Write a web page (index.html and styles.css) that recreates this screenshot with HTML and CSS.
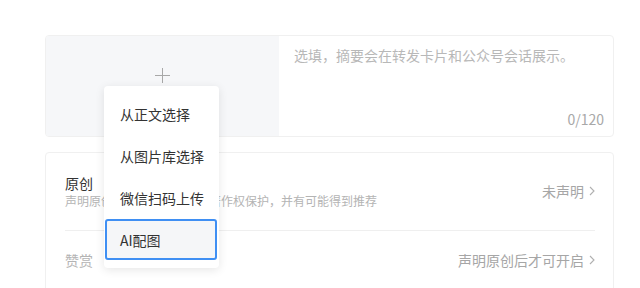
FILE: index.html
```html
<!DOCTYPE html>
<html lang="zh-CN">
<head>
<meta charset="utf-8">
<title>封面与摘要</title>
<link rel="stylesheet" href="styles.css">
</head>
<body>
<div class="page">
  <div class="cover-card">
    <div class="cover-pick">
      <svg class="plus" width="15" height="15" viewBox="0 0 15 15"><path d="M7.5 0v15M0 7.5h15" stroke="#a8a8a8" stroke-width="1" fill="none"/></svg>
    </div>
    <div class="digest">
      <div class="placeholder">选填，摘要会在转发卡片和公众号会话展示。</div>
      <div class="counter">0/120</div>
    </div>
  </div>

  <div class="settings-card">
    <div class="row row-first">
      <div class="row-main">
        <div class="row-label">原创</div>
        <div class="row-desc">声明原创后，该文章将受到著作权保护，并有可能得到推荐</div>
      </div>
      <div class="row-value">未声明<svg class="chev" width="6" height="10" viewBox="0 0 6 10"><path d="M1 1l4 4-4 4" stroke="#b0b0b0" stroke-width="1.1" fill="none"/></svg></div>
    </div>
    <div class="row">
      <div class="row-main">
        <div class="row-label disabled">赞赏</div>
      </div>
      <div class="row-value">声明原创后才可开启<svg class="chev" width="6" height="10" viewBox="0 0 6 10"><path d="M1 1l4 4-4 4" stroke="#b0b0b0" stroke-width="1.1" fill="none"/></svg></div>
    </div>
  </div>

  <div class="menu">
    <div class="menu-item">从正文选择</div>
    <div class="menu-item">从图片库选择</div>
    <div class="menu-item">微信扫码上传</div>
    <div class="menu-item active">AI配图</div>
  </div>
</div>
</body>
</html>
```

FILE: styles.css
```css
* { box-sizing: border-box; }
html, body {
  margin: 0;
  padding: 0;
  background: #fff;
  font-family: "Noto Sans CJK SC", "Noto Sans", sans-serif;
  color: #333;
}
.page {
  position: relative;
  width: 640px;
  height: 288px;
  overflow: hidden;
  padding: 35px 0 0 45px;
}
.cover-card {
  display: flex;
  width: 569px;
  height: 102px;
  border: 1px solid #f0f0f0;
  border-radius: 4px;
  overflow: hidden;
}
.cover-pick {
  width: 233px;
  background: #f6f7f9;
  display: flex;
  justify-content: center;
  padding-top: 32px;
}
.plus { display: block; }
.digest {
  flex: 1;
  display: flex;
  flex-direction: column;
  justify-content: space-between;
  padding: 9px 9px 7px 15px;
}
.placeholder {
  font-size: 14px;
  line-height: 20px;
  color: #b8b8b8;
}
.counter {
  align-self: flex-end;
  font-size: 14px;
  line-height: 20px;
  color: #a8a8a8;
}
.settings-card {
  margin-top: 15px;
  width: 569px;
  height: 160px;
  border: 1px solid #f0f0f0;
  border-radius: 4px;
  padding: 0 18px 0 19px;
}
.row {
  display: flex;
  align-items: center;
  justify-content: space-between;
  padding: 19px 0 20px;
}
.row-first {
  padding: 20px 0 21px;
  border-bottom: 1px solid #efefef;
}
.row-label {
  font-size: 14px;
  line-height: 20px;
  color: #333;
}
.row-label.disabled { color: #b4b4b4; }
.row-desc {
  font-size: 12px;
  line-height: 16px;
  color: #b4b4b4;
}
.row-value {
  display: flex;
  align-items: center;
  gap: 5px;
  font-size: 14px;
  line-height: 20px;
  color: #a6a6a6;
}
.chev { display: block; }
.menu {
  position: absolute;
  left: 104px;
  top: 86px;
  width: 115px;
  padding: 7px 2px 8px 1px;
  background: #fff;
  border-radius: 4px;
  box-shadow: 0 2px 10px rgba(0, 0, 0, 0.1);
}
.menu-item {
  height: 42px;
  display: flex;
  align-items: center;
  padding-left: 13px;
  font-size: 14px;
  color: #333;
  border: 2px solid transparent;
  border-radius: 3px;
}
.menu-item.active {
  height: 41px;
  border-color: #3f8ff3;
  background: #f5f6f8;
}
```
